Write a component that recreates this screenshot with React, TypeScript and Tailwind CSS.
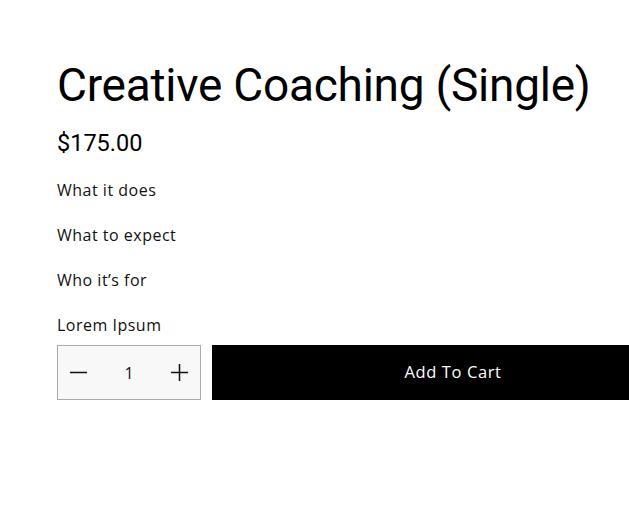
import React from "react";

export default function App() {
  const body = { fontFamily: '"Open Sans", "Liberation Sans", sans-serif' };
  const head = { fontFamily: 'Roboto, "Liberation Sans", sans-serif' };
  return (
    <div className="w-[629px] h-[522px] bg-white overflow-hidden">
      <div className="pl-[57px] pt-[57px]">
        <h1
          className="text-[46px] leading-[56px] text-black tracking-[-0.25px] whitespace-nowrap"
          style={head}
        >
          Creative Coaching (Single)
        </h1>
        <div className="mt-[15px] text-[23.5px] leading-[30px] text-black" style={head}>
          $175.00
        </div>
        <div
          className="mt-[21px] flex flex-col gap-[23px] text-[16px] leading-[22px] text-[#121212] tracking-[0.5px]"
          style={body}
        >
          <div>What it does</div>
          <div>What to expect</div>
          <div>Who it’s for</div>
          <div>Lorem Ipsum</div>
        </div>
        <div className="mt-[9px] flex gap-[11px]">
          <div className="w-[144px] h-[55px] border border-[#aaaaaa] bg-[#f8f8f8] flex items-center justify-between px-[11px] shrink-0">
            <svg width="19" height="19" viewBox="0 0 20 20" className="text-[#121212]">
              <path d="M1 10h18" stroke="currentColor" strokeWidth="1.6" />
            </svg>
            <span className="text-[16px] text-[#121212]" style={body}>1</span>
            <svg width="19" height="19" viewBox="0 0 20 20" className="text-[#121212]">
              <path d="M1 10h18M10 1v18" stroke="currentColor" strokeWidth="1.6" />
            </svg>
          </div>
          <button
            className="w-[482px] shrink-0 h-[55px] bg-black text-white text-[16.5px] font-medium tracking-[0.6px] flex items-center justify-center"
            style={body}
          >
            Add To Cart
          </button>
        </div>
      </div>
    </div>
  );
}
